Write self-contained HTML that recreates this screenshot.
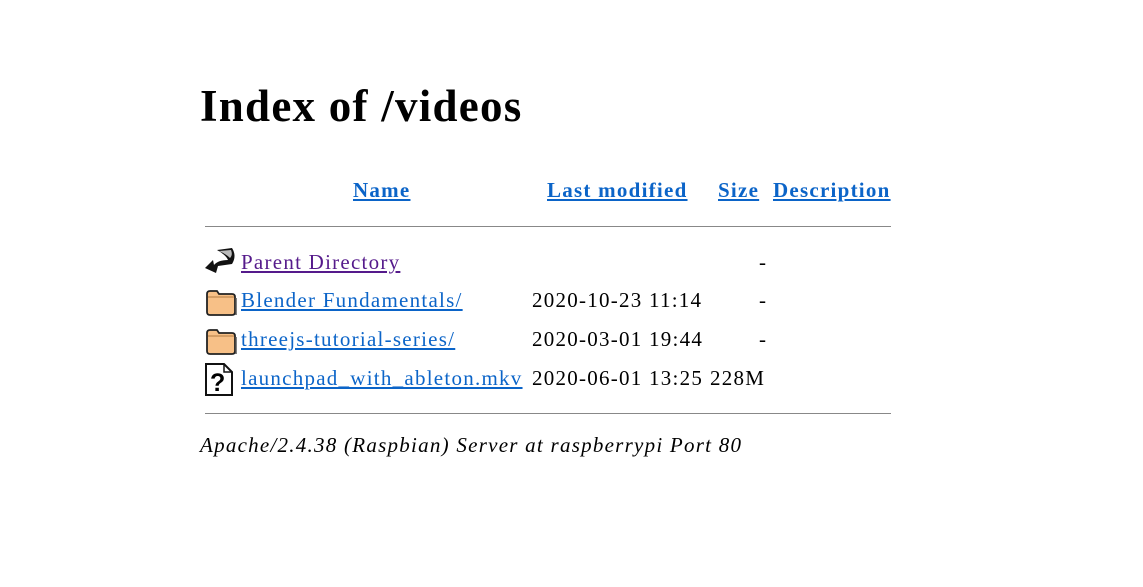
<!DOCTYPE html>
<html><head><style>
body{margin:0;width:1143px;height:587px;background:#fff;font-family:"Liberation Serif",serif;color:#000;position:relative;overflow:hidden}
.a{position:absolute;white-space:nowrap;font-size:21px;line-height:24px;letter-spacing:1.25px}
a{color:#0b64c8;text-decoration:underline}
.v{color:#551a8b}
h1{position:absolute;left:200px;top:78px;margin:0;font-size:45px;line-height:56px;font-weight:bold;letter-spacing:1.25px}
.hr{position:absolute;left:205px;width:686px;height:0;border-top:1.5px solid #888}
b a{font-weight:bold}
svg{position:absolute}
</style></head><body>
<h1>Index of /videos</h1>
<div class="a" style="left:353px;top:178px"><b><a href="#">Name</a></b></div>
<div class="a" style="left:547px;top:178px"><b><a href="#">Last modified</a></b></div>
<div class="a" style="left:718px;top:178px"><b><a href="#">Size</a></b></div>
<div class="a" style="left:773px;top:178px"><b><a href="#">Description</a></b></div>
<div class="hr" style="top:226px"></div>

<svg style="left:204px;top:246px" width="33" height="32" viewBox="0 0 33 32"><path d="M13 4 L28 2 Q33 10 28 18 L14 20 L12 27 L1 22 L9 14 L10 19 Q14 14 24 14 Q22 9 13 4Z" fill="#111"/><path d="M15 5 L27 4 Q29 9 26 12 Q22 8 15 5Z" fill="#bbb"/></svg>
<div class="a" style="left:241px;top:250px"><a class="v" href="#">Parent Directory</a></div>
<div class="a" style="left:759px;top:250px">-</div>

<svg style="left:205px;top:289px" width="32" height="28" viewBox="0 0 32 28"><path d="M2 5 Q2 2 5 2 L12 2 L14 5 L27 5 Q30 5 30 8 L30 23 Q30 26 27 26 L5 26 Q2 26 2 23Z" fill="#f7c087" stroke="#222" stroke-width="1.8"/><path d="M3 8 L29 8" stroke="#b07a40"/><path d="M31 9 L31 26" stroke="#555" stroke-width="1.5"/></svg>
<div class="a" style="left:241px;top:288px"><a href="#">Blender Fundamentals/</a></div>
<div class="a" style="left:532px;top:288px">2020-10-23 11:14</div>
<div class="a" style="left:759px;top:288px">-</div>

<svg style="left:205px;top:328px" width="32" height="28" viewBox="0 0 32 28"><path d="M2 5 Q2 2 5 2 L12 2 L14 5 L27 5 Q30 5 30 8 L30 23 Q30 26 27 26 L5 26 Q2 26 2 23Z" fill="#f7c087" stroke="#222" stroke-width="1.8"/><path d="M3 8 L29 8" stroke="#b07a40"/><path d="M31 9 L31 26" stroke="#555" stroke-width="1.5"/></svg>
<div class="a" style="left:241px;top:327px"><a href="#">threejs-tutorial-series/</a></div>
<div class="a" style="left:532px;top:327px">2020-03-01 19:44</div>
<div class="a" style="left:759px;top:327px">-</div>

<svg style="left:205px;top:363px" width="28" height="33" viewBox="0 0 28 33"><path d="M1 1 L19 1 L27 9 L27 32 L1 32Z" fill="#fff" stroke="#111" stroke-width="2"/><path d="M19 1 L19 9 L27 9" fill="none" stroke="#111" stroke-width="1.5"/><text x="5" y="28" font-family="Liberation Sans" font-weight="bold" font-size="25">?</text></svg>
<div class="a" style="left:241px;top:366px"><a href="#">launchpad_with_ableton.mkv</a></div>
<div class="a" style="left:532px;top:366px">2020-06-01 13:25</div>
<div class="a" style="left:710px;top:366px">228M</div>

<div class="hr" style="top:413px"></div>
<div class="a" style="left:200px;top:433px;font-style:italic">Apache/2.4.38 (Raspbian) Server at raspberrypi Port 80</div>
</body></html>
